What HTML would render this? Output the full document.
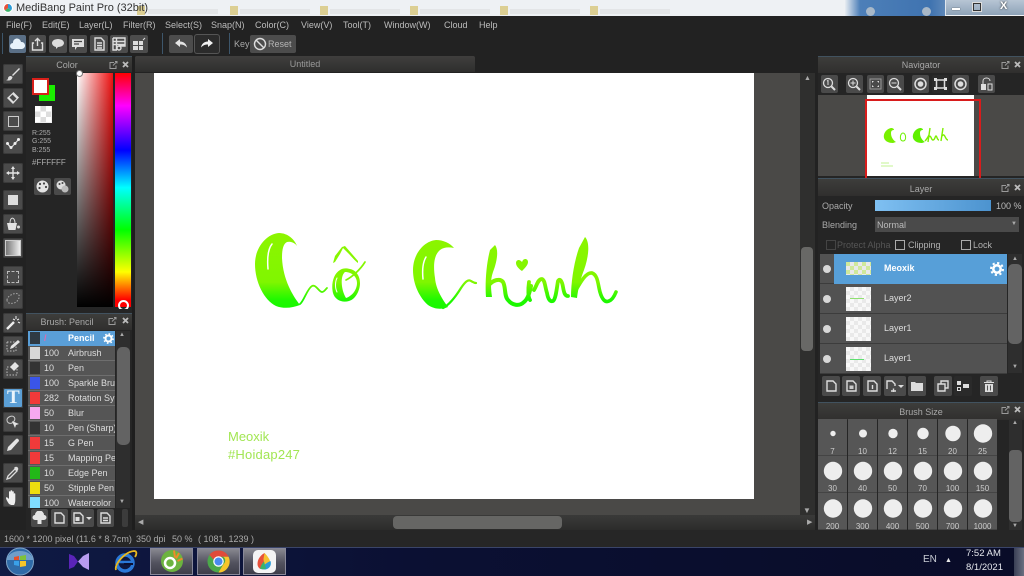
<!DOCTYPE html>
<html><head><meta charset="utf-8"><title>MediBang Paint Pro</title>
<style>
html,body{margin:0;padding:0;background:#222}
#r{position:relative;width:1024px;height:576px;overflow:hidden;background:#222;font:9px "Liberation Sans",sans-serif;color:#b9b9b9;filter:blur(.35px)}
#r div,#r span,#r svg{position:absolute}
#r span{white-space:nowrap}
.hd{background:linear-gradient(#3d3d3b,#302f2e);border-top:1px solid #41525f;color:#a8a8a8;text-align:center;line-height:16px}
.b{background:#4a4a4a;border-radius:2px}
.t{left:3px;width:20px;height:20px;background:#4b4b4b;border-radius:2px;box-shadow:inset 0 0 0 1px #3a3a3a}
.tb{top:35px;height:18px;background:#4c4c4c;border-radius:2px}
.rw{left:28px;width:87px;height:14px;background:#555;border-bottom:1px solid #6e6e6e;overflow:hidden;color:#ddd;line-height:14px}
.rw span{top:0}
.rw i{position:absolute;left:2px;top:1px;width:10px;height:12px;display:block}
.ly{left:820px;width:187px;height:29px;background:#525252;border-bottom:1px solid #3c3c3c;color:#ddd;font-size:9px}
.eye{left:3px;top:11px;width:8px;height:8px;border-radius:50%;background:#d8d8d8}
.th{left:26px;top:3px;width:25px;height:24px;background:#f8f8f8;background-image:linear-gradient(45deg,#e9e9e9 25%,transparent 25%,transparent 75%,#e9e9e9 75%),linear-gradient(45deg,#e9e9e9 25%,transparent 25%,transparent 75%,#e9e9e9 75%);background-size:8px 8px;background-position:0 0,4px 4px}
.c{width:29px;height:37px;background:#565656;box-shadow:inset 0 -1px 0 #444}
.lb{width:29px;text-align:center;color:#ccc;font-size:8px}
.m{top:20px;color:#bcbcbc}
.ck{width:8px;height:8px;border:1px solid #aaa;top:240px}
.ic{stroke:#ddd;fill:none;stroke-width:1.4}
.act{top:548px;width:43px;height:27px;background:linear-gradient(#8b8b93,#52525e 55%,#3c3c48);box-shadow:inset 0 0 0 1px #889}
</style></head><body><div id="r">

<!-- title bar -->
<div style="left:0;top:0;width:1024px;height:16px;background:#eef1f4"></div>
<div style="left:137px;top:6px;width:8px;height:9px;background:#dccf93"></div>
<div style="left:230px;top:6px;width:8px;height:9px;background:#dccf93"></div>
<div style="left:320px;top:6px;width:8px;height:9px;background:#dccf93"></div>
<div style="left:410px;top:6px;width:8px;height:9px;background:#dccf93"></div>
<div style="left:500px;top:6px;width:8px;height:9px;background:#dccf93"></div>
<div style="left:590px;top:6px;width:8px;height:9px;background:#dccf93"></div>
<div style="left:148px;top:9px;width:70px;height:5px;background:#e3e5e7"></div>
<div style="left:240px;top:9px;width:70px;height:5px;background:#e3e5e7"></div>
<div style="left:330px;top:9px;width:70px;height:5px;background:#e3e5e7"></div>
<div style="left:420px;top:9px;width:70px;height:5px;background:#e3e5e7"></div>
<div style="left:510px;top:9px;width:70px;height:5px;background:#e3e5e7"></div>
<div style="left:600px;top:9px;width:70px;height:5px;background:#e3e5e7"></div>
<div style="left:845px;top:0;width:100px;height:16px;background:linear-gradient(90deg,#e8edf2,#4d7fb8 15%,#3f73b0 85%,#5d87b8)"></div>
<div style="left:866px;top:7px;width:9px;height:9px;border-radius:50%;background:#a8b8c8"></div>
<div style="left:922px;top:7px;width:9px;height:9px;border-radius:50%;background:#a8b8c8"></div>
<div style="left:945px;top:0;width:79px;height:15px;background:linear-gradient(#b7c5d4,#8ea3b8);border-left:1px solid #dfe6ee"></div>
<div style="left:952px;top:8px;width:8px;height:2px;background:#fff;box-shadow:0 0 1px #333"></div>
<div style="left:973px;top:3px;width:6px;height:6px;border:1px solid #333;box-shadow:0 0 0 1px #ddd"></div>
<span style="left:1000px;top:0;font:bold 11px 'Liberation Sans';color:#fff;text-shadow:0 0 2px #222">X</span>
<svg style="left:2px;top:2px" width="12" height="12" viewBox="0 0 12 12"><circle cx="6" cy="6" r="5" fill="#fff"/><path d="M6 2a4 4 0 0 0-3 6.500L6 6z" fill="#e8503a"/><path d="M6 2a4 4 0 0 1 3 6.500L6 6z" fill="#2a9bd8"/><path d="M3 8.500a4 4 0 0 0 6 0L6 6z" fill="#3ab36a"/></svg>
<span style="left:16px;top:2px;font-size:11px;color:#333">MediBang Paint Pro (32bit)</span>

<!-- menu -->
<span class="m" style="left:6px">File(F)</span>
<span class="m" style="left:42px">Edit(E)</span>
<span class="m" style="left:79px">Layer(L)</span>
<span class="m" style="left:123px">Filter(R)</span>
<span class="m" style="left:165px">Select(S)</span>
<span class="m" style="left:211px">Snap(N)</span>
<span class="m" style="left:255px">Color(C)</span>
<span class="m" style="left:301px">View(V)</span>
<span class="m" style="left:343px">Tool(T)</span>
<span class="m" style="left:384px">Window(W)</span>
<span class="m" style="left:444px">Cloud</span>
<span class="m" style="left:479px">Help</span>

<!-- toolbar -->
<div style="left:2px;top:33px;width:1px;height:21px;background:#3d566b"></div>
<div style="left:162px;top:33px;width:1px;height:21px;background:#3d566b"></div>
<div style="left:229px;top:33px;width:1px;height:21px;background:#3d566b"></div>
<div class="tb" style="left:9px;width:17px;background:#5a6f86"></div>
<svg style="left:10px;top:38px" width="15" height="12" viewBox="0 0 15 12"><path d="M3 11a3 3 0 0 1 0-6 4 4 0 0 1 8-1 3.500 3.500 0 0 1 1 7z" fill="#e8f2fa"/></svg>
<div class="tb" style="left:29px;width:17px"></div>
<svg style="left:31px;top:37px" width="13" height="14" viewBox="0 0 13 14"><path class="ic" d="M3 6H1.500v7h10V6H10M6.500 9V1.500M4 4l2.500-2.500L9 4"/></svg>
<div class="tb" style="left:49px;width:18px"></div>
<svg style="left:51px;top:38px" width="14" height="12" viewBox="0 0 14 12"><path d="M7 1c3.300 0 6 1.800 6 4s-2.700 4-6 4l-2 2V9C2.800 8.500 1 7 1 5c0-2.200 2.700-4 6-4z" fill="#ddd"/></svg>
<div class="tb" style="left:69px;width:18px"></div>
<svg style="left:71px;top:38px" width="14" height="13" viewBox="0 0 14 13"><path d="M1 1h12v8H6l-2 3V9H1z" fill="#ddd"/><path d="M3 3.500h8M3 6h5" stroke="#444" stroke-width="1.200"/></svg>
<div class="tb" style="left:90px;width:18px"></div>
<svg style="left:92px;top:37px" width="14" height="14" viewBox="0 0 14 14"><path class="ic" d="M3 1h6l3 3v9H3zM5 6h5M5 8.500h5M5 11h5"/></svg>
<div class="tb" style="left:110px;width:18px"></div>
<svg style="left:112px;top:37px" width="14" height="14" viewBox="0 0 14 14"><path class="ic" stroke-width="1" d="M1 1h12v8H7M1 1v12h4M1 4.500h12M1 7.500h12M4.500 1v12"/><circle cx="7" cy="11" r="2" class="ic" stroke-width="1"/></svg>
<div class="tb" style="left:130px;width:18px"></div>
<svg style="left:132px;top:37px" width="15" height="14" viewBox="0 0 15 14"><path d="M1 4h5v4H1zM7 4h4v4H7zM1 9h5v4H1zM7 9h4v4H7z" fill="#ddd"/><path d="M11 3l2-2" stroke="#ddd"/></svg>

<div class="tb" style="left:169px;width:24px"></div>
<svg style="left:174px;top:38px" width="14" height="12" viewBox="0 0 14 12"><path d="M6 1 1 5l5 4V6.500c3 0 5 .8 7 3-.5-3.500-3-6-7-6z" fill="#e4e4e4"/></svg>
<div class="tb" style="left:195px;width:24px;background:#2b2b2b;box-shadow:0 0 0 1px #555"></div>
<svg style="left:200px;top:38px" width="14" height="12" viewBox="0 0 14 12"><path d="M8 1l5 4-5 4V6.500c-3 0-5 .8-7 3 .5-3.500 3-6 7-6z" fill="#f0f0f0"/></svg>
<span style="left:234px;top:39px;color:#a8a8a8">Key</span>
<div class="tb" style="left:250px;width:46px"></div>
<svg style="left:253px;top:37px" width="14" height="14" viewBox="0 0 14 14"><circle cx="7" cy="7" r="5.500" class="ic"/><path class="ic" d="M3 3l8 8"/></svg>
<span style="left:268px;top:39px;color:#b5b5b5">Reset</span>

<!-- left tools -->
<div class="t" style="top:64px"></div><svg style="left:5px;top:66px" width="16" height="16" viewBox="0 0 16 16"><path d="M14 2 7 9l1 1 7-7zM6 10c-2 0-3 1-3 2.500 0 1-1 1.500-2 1.500 2 1 6 1 6.500-3z" fill="#ddd"/></svg>
<div class="t" style="top:88px"></div><svg style="left:5px;top:90px" width="16" height="16" viewBox="0 0 16 16"><path d="M8.500 2 14 7.500 8 14 2 8zM4.500 7.500l4 4 3-3-4-4z" fill="#e0e0e0" fill-rule="evenodd"/></svg>
<div class="t" style="top:111px"></div><div style="left:8px;top:116px;width:9px;height:9px;border:1px solid #ccc"></div>
<div class="t" style="top:134px"></div><svg style="left:5px;top:136px" width="16" height="16" viewBox="0 0 16 16"><path d="M2 7l4 5 8-9" fill="none" stroke="#ddd" stroke-width="1.200"/><circle cx="2.500" cy="7.500" r="1.500" fill="#eee"/><circle cx="6" cy="11.500" r="1.500" fill="#eee"/><circle cx="10" cy="7.500" r="1.500" fill="#eee"/><circle cx="13.500" cy="3.500" r="1.500" fill="#eee"/></svg>
<div class="t" style="top:163px"></div><svg style="left:5px;top:165px" width="16" height="16" viewBox="0 0 16 16"><path d="M8 1 6 4h1.300v3.300H4V6L1 8l3 2V8.700h3.300V12H6l2 3 2-3H8.700V8.700H12V10l3-2-3-2v1.300H8.700V4H10z" fill="#e4e4e4"/></svg>
<div class="t" style="top:190px"></div><div style="left:8px;top:195px;width:10px;height:10px;background:#ddd"></div>
<div class="t" style="top:214px"></div><svg style="left:5px;top:216px" width="16" height="16" viewBox="0 0 16 16"><path d="M2 7h10l-1.500 7h-7z" fill="#e4e4e4"/><path d="M5 7c0-7 5-6 5 0" fill="none" stroke="#ddd"/><circle cx="13.500" cy="11" r="1.500" fill="#ddd"/></svg>
<div class="t" style="top:238px"></div><div style="left:6px;top:241px;width:14px;height:14px;background:linear-gradient(90deg,#777,#eee);box-shadow:0 0 0 1px #ccc"></div>
<div class="t" style="top:266px"></div><div style="left:7px;top:271px;width:10px;height:10px;border:1px dashed #bbb"></div>
<div class="t" style="top:289px"></div><svg style="left:5px;top:291px" width="16" height="16" viewBox="0 0 16 16"><path d="M2 9c0-4 8-8 11-6s0 8-4 9-7 0-7-3z" fill="none" stroke="#aaa" stroke-dasharray="1.500 1.500"/></svg>
<div class="t" style="top:313px"></div><svg style="left:5px;top:315px" width="16" height="16" viewBox="0 0 16 16"><path d="M2 14 9 7" stroke="#eee" stroke-width="2.400"/><path d="M11 1v3M8 4l2 1M14 4l-2 1M13 7l2 1" stroke="#eee"/></svg>
<div class="t" style="top:336px"></div><svg style="left:5px;top:338px" width="16" height="16" viewBox="0 0 16 16"><path d="M2 4h9M2 4v9h9V8" fill="none" stroke="#bbb" stroke-dasharray="1.500 1.500"/><path d="M5 11l1-3 7-6 2 2-7 6z" fill="#e4e4e4"/></svg>
<div class="t" style="top:359px"></div><svg style="left:5px;top:361px" width="16" height="16" viewBox="0 0 16 16"><path d="M2 6h10v8H2z" fill="none" stroke="#bbb" stroke-dasharray="1.500 1.500"/><path d="M5 6l5-5 4 4-5 5z" fill="#e4e4e4"/></svg>
<div class="t" style="top:388px;background:#5b9fd6"></div><span style="left:7px;top:387px;font:bold 19px 'Liberation Serif';color:#eaf4fb">T</span>
<div class="t" style="top:412px"></div><svg style="left:5px;top:414px" width="16" height="16" viewBox="0 0 16 16"><path d="M2 6c0-3 5-5 7-3s0 5-2 6-5 0-5-3z" fill="none" stroke="#ccc"/><path d="M7 7l7 3-3 1-1 3z" fill="#e4e4e4"/></svg>
<div class="t" style="top:435px"></div><svg style="left:5px;top:437px" width="16" height="16" viewBox="0 0 16 16"><path d="M2 14l1-4 8-8c1-1 3 0 3 2l-8 9z" fill="#e4e4e4"/></svg>
<div class="t" style="top:463px"></div><svg style="left:5px;top:465px" width="16" height="16" viewBox="0 0 16 16"><path d="M2 14l1-3 7-7 2 2-7 7z" fill="none" stroke="#ddd" stroke-width="1.300"/><path d="M9 3l1-1c2-1 4 1 3 3l-1 1z" fill="#ddd"/></svg>
<div class="t" style="top:487px"></div><svg style="left:5px;top:489px" width="16" height="16" viewBox="0 0 16 16"><path d="M4 15c-2-3-3-5-3-6s1-1 2 0l1 1V3c0-1 1.500-1 1.500 0v4-5c0-1 1.700-1 1.700 0v5-4c0-1 1.600-1 1.600 0v5-3c0-1 1.500-1 1.500 0v6c0 3-1 5-2 6z" fill="#eee"/></svg>

<!-- Color panel -->
<div style="left:26px;top:57px;width:106px;height:256px;background:#252525"></div>
<div class="hd" style="left:26px;top:56px;width:106px;height:16px;padding-right:24px;box-sizing:border-box">Color</div>
<div style="left:39px;top:85px;width:16px;height:16px;background:#1aee00"></div>
<div style="left:32px;top:78px;width:13px;height:13px;background:#fff;border:2px solid #d8201a"></div>
<div style="left:35px;top:106px;width:17px;height:17px;background-color:#fff;background-image:linear-gradient(45deg,#ddd 25%,transparent 25%,transparent 75%,#ddd 75%),linear-gradient(45deg,#ddd 25%,transparent 25%,transparent 75%,#ddd 75%);background-size:11px 11px;background-position:0 0,5.500px 5.500px"></div>
<span style="left:32px;top:130px;font-size:7px;color:#aaa;line-height:8.300px;white-space:pre">R:255
G:255
B:255</span>
<span style="left:32px;top:158px;font-size:8px;color:#aaa">#FFFFFF</span>
<div class="b" style="left:34px;top:178px;width:17px;height:17px"></div>
<svg style="left:36px;top:180px" width="13" height="13" viewBox="0 0 13 13"><circle cx="6.500" cy="6.500" r="6" fill="#e4e4e4"/><circle cx="4" cy="4" r="1.100" fill="#444"/><circle cx="8" cy="3.500" r="1.100" fill="#444"/><circle cx="10" cy="7" r="1.100" fill="#444"/><circle cx="3.500" cy="8" r="1.100" fill="#444"/></svg>
<div class="b" style="left:54px;top:178px;width:17px;height:17px"></div>
<svg style="left:56px;top:180px" width="13" height="13" viewBox="0 0 13 13"><circle cx="5" cy="5" r="4.500" fill="#ddd"/><circle cx="9" cy="9" r="3.500" fill="#bbb"/><circle cx="3.500" cy="4" r="1" fill="#444"/><circle cx="6.500" cy="3" r="1" fill="#444"/></svg>
<div style="left:77px;top:73px;width:36px;height:234px;background:linear-gradient(transparent,#000),linear-gradient(90deg,#fff,#f01010)"></div>
<div style="left:77px;top:73px;width:5px;height:5px;border-radius:50%;border:1px solid #777;margin:-3px 0 0 -1px;background:#fff"></div>
<div style="left:115px;top:73px;width:16px;height:234px;background:linear-gradient(#ff0000 0,#ff00ff 14%,#0000ff 33%,#00ffff 49%,#00ff00 67%,#ffff00 85%,#ff0000 97%)"></div>
<div style="left:118px;top:300px;width:7px;height:7px;border-radius:50%;border:2px solid #fff;clip-path:inset(0 0 2px 0)"></div>
<div style="left:132px;top:56px;width:3px;height:474px;background:#1e1e1e"></div>

<!-- Brush panel -->
<div style="left:26px;top:313px;width:106px;height:217px;background:#252525"></div>
<div class="hd" style="left:26px;top:313px;width:106px;height:17px;padding-right:24px;box-sizing:border-box;line-height:17px">Brush: Pencil</div>
<div class="rw" style="top:331px;background:#5a9fd8;color:#fff;font-weight:bold;border:0;height:15px"><i style="background:#2f3a44"></i><span style="left:16px;color:#e06ab0">/</span><span style="left:40px">Pencil</span></div>
<svg style="left:103px;top:333px" width="11" height="11" viewBox="0 0 11 11"><circle cx="5.500" cy="5.500" r="3" fill="none" stroke="#fff" stroke-width="2"/><circle cx="5.500" cy="5.500" r="4.600" fill="none" stroke="#fff" stroke-width="1.600" stroke-dasharray="1.600 2"/></svg>
<div class="rw" style="top:346px"><i style="background:#d8d8d8"></i><span style="left:16px">100</span><span style="left:40px">Airbrush</span></div>
<div class="rw" style="top:361px"><i style="background:#333"></i><span style="left:16px">10</span><span style="left:40px">Pen</span></div>
<div class="rw" style="top:376px"><i style="background:#3a55e8"></i><span style="left:16px">100</span><span style="left:40px">Sparkle Brush</span></div>
<div class="rw" style="top:391px"><i style="background:#f03a3a"></i><span style="left:16px">282</span><span style="left:40px">Rotation Sym</span></div>
<div class="rw" style="top:406px"><i style="background:#f6a8f0"></i><span style="left:16px">50</span><span style="left:40px">Blur</span></div>
<div class="rw" style="top:421px"><i style="background:#333"></i><span style="left:16px">10</span><span style="left:40px">Pen (Sharp)</span></div>
<div class="rw" style="top:436px"><i style="background:#f03a3a"></i><span style="left:16px">15</span><span style="left:40px">G Pen</span></div>
<div class="rw" style="top:451px"><i style="background:#f03a3a"></i><span style="left:16px">15</span><span style="left:40px">Mapping Pen</span></div>
<div class="rw" style="top:466px"><i style="background:#22b818"></i><span style="left:16px">10</span><span style="left:40px">Edge Pen</span></div>
<div class="rw" style="top:481px"><i style="background:#eedd10"></i><span style="left:16px">50</span><span style="left:40px">Stipple Pen</span></div>
<div class="rw" style="top:496px;height:12px;border:0"><i style="background:#7fdcff"></i><span style="left:16px">100</span><span style="left:40px">Watercolor</span></div>
<div style="left:116px;top:331px;width:14px;height:177px;background:#2e2e2e"></div>
<div style="left:117px;top:347px;width:13px;height:98px;background:#636363;border-radius:5px"></div>
<span style="left:119px;top:332px;font-size:6px;color:#aaa">▲</span>
<span style="left:119px;top:499px;font-size:6px;color:#aaa">▼</span>
<div class="b" style="left:31px;top:509px;width:17px;height:18px"></div>
<svg style="left:32px;top:511px" width="15" height="14" viewBox="0 0 15 14"><path d="M3 9a2.500 2.500 0 0 1 0-5 4.500 4.500 0 0 1 9 0 2.500 2.500 0 0 1 0 5H9.500v4h-4V9z" fill="#e4e4e4"/></svg>
<div class="b" style="left:51px;top:509px;width:17px;height:18px"></div>
<svg style="left:54px;top:512px" width="11" height="12" viewBox="0 0 11 12"><path class="ic" d="M1 1h6l3 3v7H1z"/></svg>
<div class="b" style="left:71px;top:509px;width:23px;height:18px"></div>
<svg style="left:73px;top:512px" width="20" height="12" viewBox="0 0 20 12"><path class="ic" d="M1 1h6l3 3v7H1z"/><path d="M2.500 5h4v4h-4z" fill="#ddd"/><path d="M13 5h6l-3 3z" fill="#ddd"/></svg>
<div class="b" style="left:97px;top:509px;width:17px;height:18px"></div>
<svg style="left:100px;top:512px" width="11" height="12" viewBox="0 0 11 12"><path class="ic" d="M1 1h6l3 3v7H1zM3 6h5M3 8.500h5"/></svg>
<div class="b" style="left:122px;top:509px;width:6px;height:18px;background:#3c3c3c"></div>

<!-- Canvas tab & area -->
<div style="left:135px;top:56px;width:340px;height:16px;background:linear-gradient(#403f3e,#2e2e2d);color:#9a9a9a;text-align:center;line-height:16px;border-radius:2px 2px 0 0">Untitled</div>
<div style="left:135px;top:73px;width:665px;height:442px;background:#4a4947"></div>
<div style="left:154px;top:73px;width:600px;height:426px;background:#fff"></div>
<div style="left:800px;top:73px;width:15px;height:442px;background:#2f2f2e"></div>
<div style="left:801px;top:247px;width:12px;height:104px;background:#686866;border-radius:4px"></div>
<span style="left:804px;top:75px;font-size:7px;color:#aaa">▲</span>
<span style="left:803px;top:506px;font-size:8px;color:#aaa">▼</span>
<div style="left:135px;top:515px;width:680px;height:15px;background:linear-gradient(#3a3a39,#2c2c2b)"></div>
<div style="left:393px;top:516px;width:169px;height:13px;background:#666664;border-radius:4px"></div>
<span style="left:138px;top:518px;font-size:7px;color:#aaa">◀</span>
<span style="left:807px;top:518px;font-size:7px;color:#aaa">▶</span>

<!-- Lettering -->
<svg style="left:0;top:0;width:1024px;height:576px" viewBox="0 0 1024 576">
<defs>
<linearGradient id="g" gradientUnits="userSpaceOnUse" x1="0" y1="235" x2="0" y2="311"><stop offset="0" stop-color="#8cf500"/><stop offset=".62" stop-color="#80f600"/><stop offset=".85" stop-color="#20f800"/><stop offset="1" stop-color="#14f800"/></linearGradient>
</defs>
<g fill="url(#g)">
<path d="M297 246C295 240 288 233 279 233C266 234 255 248 255 264C255 282 264 300 276 306C284 309 292 308 300 305C293 296 283 280 282 258C282 250 283 244 287 242C291 241 295 243 297 246z"/>
<path d="M454 248C450 243 443 240 436 240C424 241 413 254 413 270C413 285 420 298 428 305C434 309 441 310 448 307C443 300 436 290 435 278C433 265 434 255 440 250C444 247 449 247 454 248z"/>
<path d="M358 263c-3-2-6-6-10-10l-5-5-3 6-5 8-2 1 2-7 7-9 3-1 7 8 6 7zM340 270C333 274 331 285 333 293C335 300 342 303 349 301C356 299 360 290 360 283C360 276 356 270 350 269C346 268 343 268 340 270zM345 272C340 276 341 290 346 298C352 296 357 290 357 283C357 277 352 272 345 272z" fill-rule="evenodd"/>
<path d="M522 271c-3-2-6-5-6-8 0-3 3-4 5-2l1 1 1-2c2-2 5-1 5 2 0 3-3 6-6 9z"/>
<path d="M495 245C499 250 497 262 493 272C490 280 491 290 492 297L486 297C485 285 486 265 490 250z"/>
<path d="M585 237C590 242 589 256 584 270C580 280 578 290 577 298L571 297C571 282 574 262 579 248z"/>
</g>
<g fill="none" stroke="url(#g)" stroke-linecap="round" stroke-linejoin="round">
<path d="M300 304c4-3 7-15 12-18 4-2 7 6 10 6 2 0 3-2 5-4" stroke-width="1.800"/>
<path d="M346 280c6-3 14-10 19-18" stroke-width="1.700"/>
<path d="M443 308c6-3 13-12 18-20 4-6 7-9 10-7 2 1 3 2 5 2" stroke-width="2.200"/>
<path d="M489 285c4-5 11-7 14-3 3 5 1 14 5 18 4 5 11 7 16 2 4-3 6-11 7-16" stroke-width="4"/>
<path d="M529 282c-1 7-1 15 1 18M534 290c3-5 4-11 8-11 3 1 3 8 5 14 1 6 3 9 6 8 3-2 4-15 5-20 2-3 4 0 5 6 1 6 2 9 5 9" stroke-width="3.800"/>
<path d="M576 290c4-7 10-18 16-17 6 2 6 12 8 19 2 7 5 11 9 9 3-1 5-4 7-9" stroke-width="3.600"/>
</g>
<g fill="none" stroke="#fff" stroke-linecap="round">
<path d="M272 244c-4 5-5 13-4 25" stroke-width="1.500"/>
<path d="M426 257c-3 5-4 12-3 22" stroke-width="1.500"/>
<path d="M337 278c-2 4-2 10 0 14" stroke-width="1"/>
</g>
</svg>
<span style="left:228px;top:429px;font-size:13px;color:#a2e653">Meoxik</span>
<span style="left:228px;top:447px;font-size:13px;letter-spacing:.2px;color:#a2e653">#Hoidap247</span>

<!-- Navigator -->
<div style="left:818px;top:57px;width:206px;height:121px;background:#252525"></div>
<div class="hd" style="left:818px;top:56px;width:206px;height:16px">Navigator</div>
<div class="b" style="left:821px;top:75px;width:17px;height:18px"></div>
<svg style="left:822px;top:77px" width="15" height="14" viewBox="0 0 15 14"><circle cx="6" cy="6" r="4.500" fill="none" stroke="#ddd" stroke-width="1.300"/><path d="M9.500 9.500 13 13" stroke="#ddd" stroke-width="2"/><path d="M5 4l1-.5V8" stroke="#ddd" fill="none"/></svg>
<div class="b" style="left:846px;top:75px;width:17px;height:18px"></div>
<svg style="left:847px;top:77px" width="15" height="14" viewBox="0 0 15 14"><circle cx="6" cy="6" r="4.500" fill="none" stroke="#ddd" stroke-width="1.300"/><path d="M9.500 9.500 13 13" stroke="#ddd" stroke-width="2"/><path d="M3.500 6h5M6 3.500v5" stroke="#ddd"/></svg>
<div class="b" style="left:867px;top:75px;width:17px;height:18px"></div>
<svg style="left:869px;top:78px" width="13" height="12" viewBox="0 0 13 12"><path d="M1 1h11v10H1z" fill="none" stroke="#999"/><path d="M3 3h2L3 5zM10 3H8l2 2zM3 9h2L3 7zM10 9H8l2-2z" fill="#ddd"/></svg>
<div class="b" style="left:887px;top:75px;width:17px;height:18px"></div>
<svg style="left:888px;top:77px" width="15" height="14" viewBox="0 0 15 14"><circle cx="6" cy="6" r="4.500" fill="none" stroke="#ddd" stroke-width="1.300"/><path d="M9.500 9.500 13 13" stroke="#ddd" stroke-width="2"/><path d="M3.500 6h5" stroke="#ddd"/></svg>
<div class="b" style="left:912px;top:75px;width:17px;height:18px"></div>
<svg style="left:913px;top:77px" width="15" height="14" viewBox="0 0 15 14"><circle cx="7.500" cy="7" r="5.500" fill="none" stroke="#ddd" stroke-width="1.500"/><circle cx="7.500" cy="7" r="2.800" fill="#ddd"/></svg>
<div class="b" style="left:932px;top:75px;width:17px;height:18px;background:#2a2a2a"></div>
<svg style="left:934px;top:78px" width="13" height="12" viewBox="0 0 13 12"><path d="M2.500 2h8v8h-8z" fill="none" stroke="#ddd" stroke-width="1.500"/><path d="M0 0h3v3H0zM10 0h3v3h-3zM0 9h3v3H0zM10 9h3v3h-3z" fill="#ddd"/></svg>
<div class="b" style="left:952px;top:75px;width:17px;height:18px"></div>
<svg style="left:953px;top:77px" width="15" height="14" viewBox="0 0 15 14"><circle cx="7.500" cy="7" r="5.500" fill="none" stroke="#ddd" stroke-width="1.500"/><circle cx="7.500" cy="7" r="2.800" fill="#ddd"/></svg>
<div class="b" style="left:978px;top:75px;width:17px;height:18px"></div>
<svg style="left:980px;top:77px" width="13" height="14" viewBox="0 0 13 14"><path d="M1 7h5v6H1z" fill="#ddd"/><path d="M8 7h4v6H8z" fill="none" stroke="#ddd"/><path d="M3 7V4c0-4 7-4 7 0" fill="none" stroke="#ddd"/></svg>
<div style="left:818px;top:95px;width:206px;height:81px;background:#4a4947"></div>
<div style="left:867px;top:95px;width:107px;height:81px;background:#fff"></div>
<div style="left:865px;top:99px;width:112px;height:80px;border:2px solid #d81c1c;border-bottom:0;clip-path:inset(0 0 3px 0)"></div>
<svg style="left:867px;top:95px" width="107" height="81" viewBox="0 0 107 81">
<path d="M24 33c-5 1-8 6-7 10 1 3 4 5 9 5l3-1c-3-2-5-5-5-9 0-2 1-3 3-3 0-1-1-2-3-2z" fill="#78f000"/>
<path d="M36 38c-3 0-4 8 0 8s3-8 0-8z" fill="none" stroke="#6cf000"/>
<path d="M53 33c-5 1-8 6-7 10 1 3 4 5 9 5l3-1c-3-2-5-5-5-9 0-2 1-3 3-3 0-1-1-2-3-2z" fill="#60f000"/>
<path d="M58 46c2-2 3-4 4-6M63 33l-2 14M62 42c2-3 2 3 4 3s2-4 3-4 1 4 3 4M76 33l-2 13M75 41c3-4 3 4 6 4" fill="none" stroke="#7cf000" stroke-width="1.400"/>
<path d="M14 68h8M14 71h12" stroke="#b0f070" stroke-width=".8"/></svg>

<!-- Layer panel -->
<div style="left:818px;top:178px;width:206px;height:224px;background:#252525"></div>
<div class="hd" style="left:818px;top:178px;width:206px;height:17px;line-height:20px">Layer</div>
<span style="left:822px;top:201px;color:#aaa">Opacity</span>
<div style="left:875px;top:200px;width:116px;height:11px;background:linear-gradient(90deg,#7fc0f2,#4c93cf)"></div>
<span style="left:996px;top:201px;color:#bbb">100 %</span>
<span style="left:822px;top:220px;color:#aaa">Blending</span>
<div style="left:875px;top:217px;width:144px;height:15px;background:#4a4a4a;color:#bbb;line-height:16px;text-indent:2px">Normal</div>
<span style="left:1011px;top:221px;font-size:6px;color:#aaa">▼</span>
<div class="ck" style="left:826px;border-color:#444"></div><span style="left:837px;top:240px;color:#555">Protect Alpha</span>
<div class="ck" style="left:895px"></div><span style="left:908px;top:240px;color:#b0b0b0">Clipping</span>
<div class="ck" style="left:961px"></div><span style="left:973px;top:240px;color:#b0b0b0">Lock</span>

<div class="ly" style="top:254px"><div class="eye"></div><div style="left:14px;top:0;width:173px;height:30px;background:#579fd8"></div><div class="th" style="top:8px;height:13px;background-color:#cfe89a"></div><span style="left:64px;top:9px;color:#fff;font-weight:bold">Meoxik</span></div>
<svg style="left:990px;top:262px" width="14" height="14" viewBox="0 0 14 14"><circle cx="7" cy="7" r="3.700" fill="none" stroke="#fff" stroke-width="2.600"/><circle cx="7" cy="7" r="6" fill="none" stroke="#fff" stroke-width="2" stroke-dasharray="2.200 2.500"/></svg>
<div class="ly" style="top:284px"><div class="eye"></div><div class="th"></div><span style="left:64px;top:9px">Layer2</span></div>
<div style="left:850px;top:298px;width:14px;height:1px;background:#8fe070"></div>
<div class="ly" style="top:314px"><div class="eye"></div><div class="th"></div><span style="left:64px;top:9px">Layer1</span></div>
<div class="ly" style="top:344px"><div class="eye"></div><div class="th"></div><span style="left:64px;top:9px">Layer1</span></div>
<div style="left:850px;top:359px;width:14px;height:1px;background:#5fe070"></div>
<div style="left:1008px;top:254px;width:14px;height:119px;background:#2e2e2e"></div>
<div style="left:1008px;top:264px;width:14px;height:80px;background:#636363;border-radius:5px"></div>
<span style="left:1012px;top:256px;font-size:6px;color:#aaa">▲</span>
<span style="left:1012px;top:364px;font-size:6px;color:#aaa">▼</span>

<div class="b" style="left:822px;top:376px;width:18px;height:20px"></div>
<svg style="left:826px;top:380px" width="11" height="12" viewBox="0 0 11 12"><path class="ic" d="M1 1h6l3 3v7H1z"/></svg>
<div class="b" style="left:842px;top:376px;width:18px;height:20px"></div>
<svg style="left:846px;top:380px" width="11" height="12" viewBox="0 0 11 12"><path class="ic" d="M1 1h6l3 3v7H1z"/><path d="M3.500 5.500h4v3.500h-4z" fill="#ccc"/></svg>
<div class="b" style="left:863px;top:376px;width:18px;height:20px"></div>
<svg style="left:867px;top:380px" width="11" height="12" viewBox="0 0 11 12"><path class="ic" d="M1 1h6l3 3v7H1zM5.500 9V5"/></svg>
<div class="b" style="left:884px;top:376px;width:22px;height:20px"></div>
<svg style="left:886px;top:380px" width="19" height="12" viewBox="0 0 19 12"><path class="ic" d="M1 9V1h5l3 3v2M5 11h5M7.500 8.500v5"/><path d="M12 5h6l-3 3z" fill="#ddd"/></svg>
<div class="b" style="left:908px;top:376px;width:18px;height:20px"></div>
<svg style="left:911px;top:381px" width="12" height="10" viewBox="0 0 12 10"><path d="M0 1h4l1 1h7v8H0z" fill="#ddd"/></svg>
<div class="b" style="left:934px;top:376px;width:18px;height:20px"></div>
<svg style="left:937px;top:380px" width="12" height="12" viewBox="0 0 12 12"><path class="ic" stroke-width="1" d="M1 4h7v7H1zM4 4V1h7v7H8"/></svg>
<div class="b" style="left:954px;top:376px;width:18px;height:20px;background:#2a2a2a"></div>
<svg style="left:956px;top:380px" width="14" height="12" viewBox="0 0 14 12"><path d="M1 1h4v4H1zM7 4h6v4H7z" fill="#ddd"/><path d="M1.500 7.500h3v3h-3z" fill="none" stroke="#ddd"/></svg>
<div class="b" style="left:980px;top:376px;width:18px;height:20px"></div>
<svg style="left:983px;top:380px" width="12" height="13" viewBox="0 0 12 13"><path d="M1 2.500h10M4 2.500V1h4v1.500" stroke="#ddd" fill="none"/><path d="M2 4h8v8H2z" fill="#ddd"/><path d="M4.500 5.500v5M7.500 5.500v5" stroke="#555"/></svg>

<!-- Brush Size -->
<div style="left:818px;top:402px;width:206px;height:128px;background:#252525"></div>
<div class="hd" style="left:818px;top:402px;width:206px;height:17px;line-height:18px">Brush Size</div>
<div class="c" style="left:818px;top:419px"></div><div class="c" style="left:848px;top:419px"></div><div class="c" style="left:878px;top:419px"></div><div class="c" style="left:908px;top:419px"></div><div class="c" style="left:938px;top:419px"></div><div class="c" style="left:968px;top:419px"></div>
<div class="c" style="left:818px;top:456px"></div><div class="c" style="left:848px;top:456px"></div><div class="c" style="left:878px;top:456px"></div><div class="c" style="left:908px;top:456px"></div><div class="c" style="left:938px;top:456px"></div><div class="c" style="left:968px;top:456px"></div>
<div class="c" style="left:818px;top:493px"></div><div class="c" style="left:848px;top:493px"></div><div class="c" style="left:878px;top:493px"></div><div class="c" style="left:908px;top:493px"></div><div class="c" style="left:938px;top:493px"></div><div class="c" style="left:968px;top:493px"></div>
<svg style="left:818px;top:419px" width="180" height="111" viewBox="818 419 180 111" fill="#eee">
<circle cx="833" cy="433.500" r="2.700"/><circle cx="863" cy="433.500" r="4"/><circle cx="893" cy="433.500" r="4.700"/><circle cx="923" cy="433.500" r="5.700"/><circle cx="953" cy="433.500" r="7.700"/><circle cx="983" cy="433.500" r="9.200"/>
<circle cx="833" cy="471" r="9.200"/><circle cx="863" cy="471" r="9.200"/><circle cx="893" cy="471" r="9.200"/><circle cx="923" cy="471" r="9.200"/><circle cx="953" cy="471" r="9.200"/><circle cx="983" cy="471" r="9.200"/>
<circle cx="833" cy="508.500" r="9.200"/><circle cx="863" cy="508.500" r="9.200"/><circle cx="893" cy="508.500" r="9.200"/><circle cx="923" cy="508.500" r="9.200"/><circle cx="953" cy="508.500" r="9.200"/><circle cx="983" cy="508.500" r="9.200"/>
</svg>
<span class="lb" style="left:818px;top:447px">7</span><span class="lb" style="left:848px;top:447px">10</span><span class="lb" style="left:878px;top:447px">12</span><span class="lb" style="left:908px;top:447px">15</span><span class="lb" style="left:938px;top:447px">20</span><span class="lb" style="left:968px;top:447px">25</span>
<span class="lb" style="left:818px;top:484px">30</span><span class="lb" style="left:848px;top:484px">40</span><span class="lb" style="left:878px;top:484px">50</span><span class="lb" style="left:908px;top:484px">70</span><span class="lb" style="left:938px;top:484px">100</span><span class="lb" style="left:968px;top:484px">150</span>
<span class="lb" style="left:818px;top:522px">200</span><span class="lb" style="left:848px;top:522px">300</span><span class="lb" style="left:878px;top:522px">400</span><span class="lb" style="left:908px;top:522px">500</span><span class="lb" style="left:938px;top:522px">700</span><span class="lb" style="left:968px;top:522px">1000</span>
<div style="left:1009px;top:419px;width:13px;height:111px;background:#2e2e2e"></div>
<div style="left:1009px;top:450px;width:13px;height:72px;background:#636363;border-radius:4px"></div>
<span style="left:1012px;top:420px;font-size:6px;color:#aaa">▲</span>
<span style="left:1012px;top:523px;font-size:6px;color:#aaa">▼</span>

<!-- panel header popout + close icons -->
<svg style="left:0;top:0;width:1024px;height:576px" viewBox="0 0 1024 576" fill="none" stroke="#9a9a9a" stroke-width="1">
<path d="M114 62.500h-4v6h6v-3M113 65.500l4-4M115 61.500h2v2"/><path d="M123 62l5 5M128 62l-5 5" stroke="#bbb" stroke-width="1.800"/>
<path d="M113 318.500h-4v6h6v-3M112 321.500l4-4M114 317.500h2v2"/><path d="M123 318l5 5M128 318l-5 5" stroke="#bbb" stroke-width="1.800"/>
<path d="M1006 62.500h-4v6h6v-3M1005 65.500l4-4M1007 61.500h2v2"/><path d="M1015 62l5 5M1020 62l-5 5" stroke="#bbb" stroke-width="1.800"/>
<path d="M1006 185.500h-4v6h6v-3M1005 188.500l4-4M1007 184.500h2v2"/><path d="M1015 185l5 5M1020 185l-5 5" stroke="#bbb" stroke-width="1.800"/>
<path d="M1006 407.500h-4v6h6v-3M1005 410.500l4-4M1007 406.500h2v2"/><path d="M1015 407l5 5M1020 407l-5 5" stroke="#bbb" stroke-width="1.800"/>
</svg>

<!-- Status bar -->
<div style="left:0;top:530px;width:1024px;height:17px;background:#262626"></div>
<span style="left:4px;top:534px;color:#aaa">1600 * 1200 pixel</span>
<span style="left:76px;top:534px;color:#aaa">(11.6 * 8.7cm)</span>
<span style="left:136px;top:534px;color:#aaa">350 dpi</span>
<span style="left:172px;top:534px;color:#aaa">50 %</span>
<span style="left:198px;top:534px;color:#aaa">( 1081, 1239 )</span>

<!-- Taskbar -->
<div style="left:0;top:547px;width:1024px;height:29px;background:linear-gradient(90deg,#0f1a44,#0b1033 40%,#090c28);border-top:1px solid #3a4468;box-sizing:border-box"></div>
<svg style="left:5px;top:547px" width="30" height="29" viewBox="0 0 30 29"><circle cx="15" cy="14.500" r="13.500" fill="#2f6ba8" stroke="#7fa4c8"/><path d="M2 13a13 9 0 0 1 26 0z" fill="#8ab4d8" opacity=".7"/><path d="M9 10l5-1v4H9z" fill="#e8502a"/><path d="M15 9l6-1v5h-6z" fill="#7fc23a"/><path d="M9 14h5v5l-5-1z" fill="#3aa0e8"/><path d="M15 14h6v5l-6 1z" fill="#f5c52a"/></svg>
<svg style="left:68px;top:552px" width="22" height="19" viewBox="0 0 22 19"><path d="M1 2l8 7.500L1 17z" fill="#6a2fc8"/><path d="M21 1v17l-6-3L10 9.500 15 4z" fill="#b89cf0"/><path d="M1 2l5 2 4 5.500L6 15l-5 2z" fill="#5a24b8"/></svg>
<svg style="left:113px;top:549px" width="25" height="24" viewBox="0 0 25 24"><ellipse cx="12" cy="14" rx="8" ry="8" fill="none" stroke="#2a78d8" stroke-width="3.500"/><path d="M5 13h14" stroke="#2a78d8" stroke-width="2.500"/><path d="M20 15h-9" stroke="#0b1033" stroke-width="2"/><path d="M3 21C1 15 12 3 21 2c3 0 3 3 1 6" fill="none" stroke="#e8b820" stroke-width="1.800"/></svg>
<div class="act" style="left:150px"></div>
<svg style="left:159px;top:548px" width="26" height="26" viewBox="0 0 26 26"><circle cx="13" cy="13" r="11" fill="#6cb33f"/><circle cx="11" cy="15" r="5" fill="none" stroke="#fff" stroke-width="2.500"/><path d="M15 2.500l1 7M20 5l-3 5.500M23.500 10.500l-5 2.500" stroke="#f08a2a" stroke-width="2"/></svg>
<div class="act" style="left:197px"></div>
<svg style="left:207px;top:550px" width="23" height="23" viewBox="0 0 24 24"><circle cx="12" cy="12" r="11.500" fill="#4ba84a"/><path d="M12 .5A11.500 11.500 0 0 1 22.500 7H12A5 5 0 0 0 7.200 10.500L2.500 5A11.500 11.500 0 0 1 12 .5z" fill="#e04a3a"/><path d="M22.500 7A11.500 11.500 0 0 1 12 23.500l5-8.500a5 5 0 0 0 0-8z" fill="#f8c62a"/><circle cx="12" cy="12" r="5.500" fill="#fff"/><circle cx="12" cy="12" r="4.200" fill="#4a8af0"/></svg>
<div class="act" style="left:243px"></div>
<svg style="left:252px;top:549px" width="25" height="25" viewBox="0 0 25 25"><rect x="1" y="1" width="23" height="23" rx="5" fill="#f4f4f4"/><path d="M12.500 4c-5 3-7 7-7 11 0 2 1 4 3 5l4-8z" fill="#e8503a"/><path d="M12.500 4c3 3 6 7 6 11l-6 3-1-8z" fill="#f5c030"/><path d="M18.500 12c1.500 5-2 8.500-6 8.500-2 0-3.500-.5-4.500-1 3-3 7-6 10.500-7.500z" fill="#2a9bd8"/><path d="M8 19.500c1-3 2-5 4-7l2 7c-2 1-4 1-6 0z" fill="#3ab36a"/></svg>
<span style="left:923px;top:554px;color:#c8ccd4;font-size:10px">EN</span>
<span style="left:945px;top:557px;color:#e8e8e8;font-size:7px">▲</span>
<span style="left:966px;top:548px;color:#e4e6ec;font-size:9.500px">7:52 AM</span>
<span style="left:966px;top:562px;color:#e4e6ec;font-size:9.500px">8/1/2021</span>
<div style="left:1014px;top:548px;width:10px;height:28px;background:linear-gradient(90deg,#3a3f55,#6a6f80)"></div>
</div></body></html>
